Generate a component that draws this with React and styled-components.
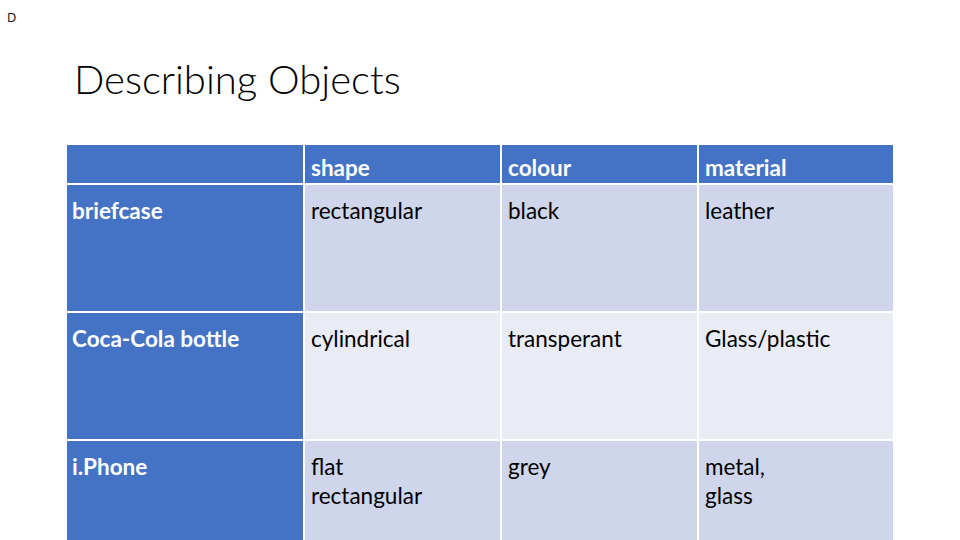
import React from 'react';
import styled, { createGlobalStyle } from 'styled-components';

const GlobalStyle = createGlobalStyle`
    html, body {
        margin: 0;
        padding: 0;
        background: #ffffff;
    }
    body {
        font-family: Lato, "Open Sans", sans-serif;
    }
`;

const Slide = styled.div`
    position: relative;
    width: 960px;
    height: 540px;
    overflow: hidden;
    background: #ffffff;
`;

const SlideMark = styled.div`
    padding: 11px 0 0 7px;
    height: 15px;
    font-family: "DejaVu Sans", sans-serif;
    font-size: 12px;
    line-height: 15px;
    color: #222;
`;

const Title = styled.h1`
    margin: 0;
    padding: 29px 0 0 74px;
    font-family: Lato, sans-serif;
    font-weight: 300;
    font-size: 40px;
    line-height: 48px;
    color: #000;
`;

const Table = styled.div`
    display: grid;
    grid-template-columns: 236px 195px 195px 194px;
    grid-template-rows: 38px 126px 126px 126px;
    gap: 2px;
    margin: 42px 0 0 67px;
    width: 826px;
`;

const colours = {
    head: '#4472c4',
    dark: '#cfd5ea',
    light: '#e9ebf5',
};

const Cell = styled.div`
    background: ${props => colours[props.tone]};
    color: ${props => (props.tone === 'head' ? '#ffffff' : '#000000')};
    font-weight: ${props => (props.tone === 'head' ? 700 : 400)};
    font-size: 22.5px;
    line-height: 29px;
    padding: ${props => (props.first ? '0 5px' : '0 6px')};
    padding-top: ${props => (props.header ? '8px' : '11px')};
`;

const columns = ['shape', 'colour', 'material'];

const rows = [
    { name: 'briefcase', tone: 'dark', values: ['rectangular', 'black', 'leather'] },
    { name: 'Coca-Cola bottle', tone: 'light', values: ['cylindrical', 'transperant', 'Glass/plastic'] },
    { name: 'i.Phone', tone: 'dark', values: ['flat\nrectangular', 'grey', 'metal,\nglass'] },
];

const Lines = ({ text }) =>
    text.split('\n').map((line, i) => <div key={i}>{line}</div>);

const App = () => {
    return (
        <>
            <GlobalStyle />
            <Slide>
                <SlideMark>D</SlideMark>
                <Title>Describing Objects</Title>
                <Table>
                    <Cell tone="head" header first />
                    {columns.map(c => (
                        <Cell key={c} tone="head" header>{c}</Cell>
                    ))}
                    {rows.map(row => (
                        <React.Fragment key={row.name}>
                            <Cell tone="head" first>{row.name}</Cell>
                            {row.values.map((v, i) => (
                                <Cell key={i} tone={row.tone}><Lines text={v} /></Cell>
                            ))}
                        </React.Fragment>
                    ))}
                </Table>
            </Slide>
        </>
    );
};

export default App;
